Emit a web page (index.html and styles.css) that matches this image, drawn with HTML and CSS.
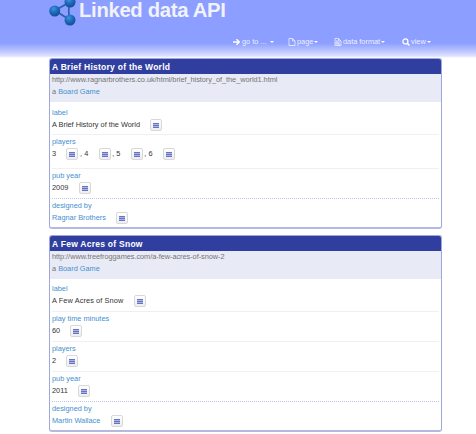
FILE: index.html
```
<!DOCTYPE html>
<html lang="en">
<head>
<meta charset="utf-8">
<title>Linked data API</title>
<link rel="stylesheet" href="styles.css">
</head>
<body>
<svg class="defs" width="0" height="0"><defs><radialGradient id="ball" cx=".4" cy=".3" r=".7"><stop offset="0" stop-color="#4292dc"/><stop offset=".45" stop-color="#206fc2"/><stop offset="1" stop-color="#164b94"/></radialGradient></defs></svg>
<header class="banner">
  <div class="brand">
    <svg class="logo" viewBox="0 0 27 26"><path d="M17 23l5 2-6-.5z" fill="#858bad"/><path d="M6 10.500L21 2Q18.500 11 21 20z" fill="none" stroke="#2861b0" stroke-width="1.700"/><g fill="url(#ball)"><circle cx="5.700" cy="11" r="5.500"/><circle cx="21" cy="2" r="5.500"/><circle cx="21" cy="20" r="5.500"/></g></svg>
    <h1>Linked data API</h1>
  </div>
  <nav class="menu">
    <a class="goto"><svg class="ico" viewBox="0 0 8 8"><path d="M0 4h6M3.5 1.2L6.3 4 3.5 6.8" fill="none" stroke="#fff" stroke-width="1.5"/></svg><span>go to ...</span><i class="caret"></i></a>
    <a class="page"><svg class="ico" viewBox="0 0 8 8"><path d="M1 .5h3.5L7 3v4.5H1zM4.5.5V3H7" fill="none" stroke="#edf0ff" stroke-width=".8"/></svg><span>page</span><i class="caret"></i></a>
    <a class="format"><svg class="ico" viewBox="0 0 8 8"><path d="M1 .5h3.5L7 3v4.5H1zM4.5.5V3H7M2 4h2v2H2zM4 5h2M3 2v2M4 6l2 1" fill="none" stroke="#edf0ff" stroke-width=".8"/></svg><span>data format</span><i class="caret"></i></a>
    <a class="view"><svg class="ico" viewBox="0 0 8 8"><path d="M5.4 5.4L7.5 7.5" stroke="#fff" stroke-width="1.5"/><circle cx="3.4" cy="3.4" r="2.5" fill="none" stroke="#fff" stroke-width="1.3"/></svg><span>view</span><i class="caret"></i></a>
  </nav>
</header>
<main>
  <section class="card first">
    <h2>A Brief History of the World</h2>
    <div class="about"><p class="url">http://www.ragnarbrothers.co.uk/html/brief_history_of_the_world1.html</p><p>a <a>Board Game</a></p></div>
    <dl class="row r-label"><dt>label</dt><dd><span>A Brief History of the World</span><b class="btn"></b></dd></dl>
    <dl class="row r-many"><dt>players</dt><dd><span>3</span><b class="btn"></b><em>,</em><span>4</span><b class="btn"></b><em>,</em><span>5</span><b class="btn"></b><em>,</em><span>6</span><b class="btn"></b></dd></dl>
    <dl class="row dotted"><dt>pub year</dt><dd><span>2009</span><b class="btn"></b></dd></dl>
    <dl class="row last"><dt>designed by</dt><dd><a>Ragnar Brothers</a><b class="btn"></b></dd></dl>
  </section>
  <section class="card second">
    <h2>A Few Acres of Snow</h2>
    <div class="about"><p class="url">http://www.treefroggames.com/a-few-acres-of-snow-2</p><p>a <a>Board Game</a></p></div>
    <dl class="row r-label"><dt>label</dt><dd><span class="spaced">A Few Acres of Snow</span><b class="btn"></b></dd></dl>
    <dl class="row"><dt>play time minutes</dt><dd><span>60</span><b class="btn"></b></dd></dl>
    <dl class="row"><dt>players</dt><dd><span>2</span><b class="btn"></b></dd></dl>
    <dl class="row dotted"><dt>pub year</dt><dd><span>2011</span><b class="btn"></b></dd></dl>
    <dl class="row last"><dt>designed by</dt><dd><a>Martin Wallace</a><b class="btn"></b></dd></dl>
  </section>
</main>
</body>
</html>
```
FILE: styles.css
```
* { box-sizing: border-box; }
body { margin: 0; height: 434px; overflow: hidden; background: #fff; color: #333; font: 7.35px/12px "Liberation Sans", Arial, sans-serif; }
h1, h2, p, dl, dt, dd { margin: 0; font-size: inherit; }
.defs { position: absolute; }
.banner { height: 58px; padding-left: 49px; background: linear-gradient(#8c9eff 0, #8c9eff 43px, #b5c0ff 50px, #dde2ff 56px, #fff 58px); }
.brand { display: flex; height: 36px; }
.logo { width: 27px; height: 26px; margin-right: 3px; }
h1 { font-size: 20.3px; line-height: 20px; color: #f1f2fa; white-space: nowrap; letter-spacing: -.32px; }
.menu { display: flex; height: 12px; color: #f0f2ff; position: relative; }
.menu a { position: absolute; top: 0; display: flex; align-items: center; white-space: nowrap; }
.goto { left: 184px; }
.page { left: 239px; }
.format { left: 285px; }
.view { left: 353px; }
.ico { width: 8px; height: 8px; margin-right: 1px; }
.caret { border: 2px solid transparent; border-top-color: #fff; border-bottom: 0; margin-left: 1px; }
.goto .caret { margin-left: 3px; }
main { width: 393px; margin: 0 0 0 49px; }
.card { border: 1px solid #9fa8da; border-bottom: 2px solid #b3b9e0; border-radius: 3px; overflow: hidden; }
.first { height: 171px; margin-bottom: 6px; }
.second { height: 197px; }
h2 { height: 15px; padding-left: 2px; background: #303f9f; color: #fff; font-size: 8.5px; line-height: 16px; letter-spacing: .26px; }
.about { height: 28px; padding: 0 2px; background: #e8eaf6; background-clip: content-box; color: #757575; }
.about { padding: 0; }
.about p { white-space: nowrap; padding-left: 2px; }
.about .url { letter-spacing: -.035px; }
a, dt { color: #4590d0; }
.menu a { color: #f0f2ff; }
.row { height: 30px; margin: 0 2px; padding-top: 1px; border-bottom: 1px solid #eef0f4; }
.r-label { height: 33px; padding-top: 5px; }
.r-many { height: 34px; }
.dotted { border-bottom: 1px dotted #c0c7ec; }
.last { border: 0; }
.second .r-label { padding-top: 4px; }
.spaced { letter-spacing: .1px; }
dd { display: flex; height: 12px; }
.btn { width: 12px; height: 12px; margin-left: 10.3px; border: 1px solid #d8d8d8; border-radius: 2px; background: linear-gradient(#6673c8 0 1px, #aab2e2 1px 2px, #6673c8 2px 3px, #aab2e2 3px 4px, #6673c8 4px 5px) 2px 3px / 6px 5px no-repeat, linear-gradient(#fff, #eee); }
em { font-style: normal; margin: 0 2px 0 1.7px; }
```
